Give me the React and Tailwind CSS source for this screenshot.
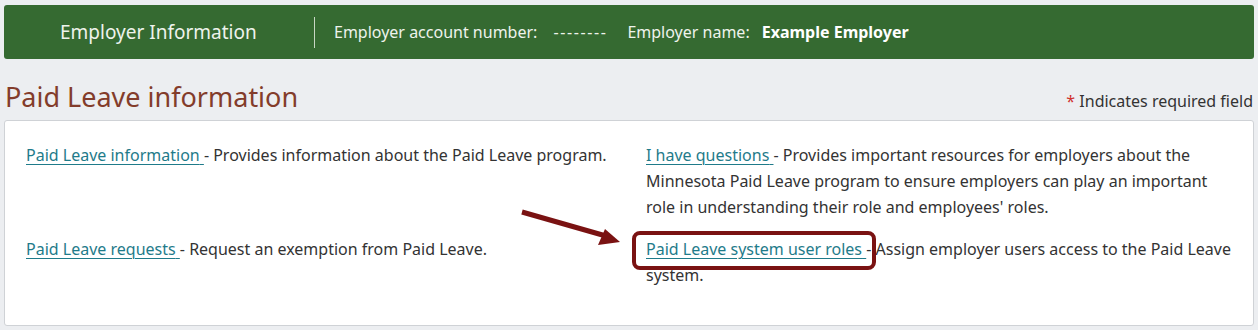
import React from 'react';

function Entry({ label, children }) {
  return (
    <p className="leading-[26px]">
      <a href="#" className="text-[#1f7b8a] underline underline-offset-[3px] decoration-1">
        {label}{' '}
      </a>
      - {children}
    </p>
  );
}

function Callout() {
  return (
    <>
      <svg className="absolute left-[518px] top-[205px]" width="110" height="45" viewBox="0 0 110 45">
        <line x1="4" y1="7" x2="88" y2="31" stroke="#7a1212" strokeWidth="5" />
        <polygon points="102,37 80,40 87,24" fill="#7a1212" />
      </svg>
      <div className="absolute left-[632px] top-[231px] w-[244px] h-[39px] border-[4px] border-[#7a1212] rounded-[8px]" />
    </>
  );
}

export default function App() {
  return (
    <div
      className="relative w-[1258px] h-[330px] bg-[#eceef1] px-[4px] pt-[5px] text-[#333] text-[16px] overflow-hidden"
      style={{ fontFamily: '"Noto Sans", "Open Sans", sans-serif' }}
    >
      <div className="flex items-center h-[54px] bg-[#356a31] rounded-[3px] text-[#eef3ec]">
        <div className="w-[310px] pl-[56px] text-[19px]">Employer Information</div>
        <div className="w-px h-[31px] bg-[#c8d6c4]" />
        <div className="flex items-center pl-[19px]">
          <span>Employer account number:</span>
          <span className="ml-[16px] tracking-[1.6px]">--------</span>
          <span className="ml-[20px]">Employer name:</span>
          <span className="ml-[12px] font-bold text-white">Example Employer</span>
        </div>
      </div>

      <div className="flex items-end justify-between h-[61px] pb-[7px]">
        <h1 className="text-[27px] leading-none text-[#833c2b] pl-px font-normal pb-[3px]">Paid Leave information</h1>
        <div className="pr-px">
          <span className="text-[#d0312d]">*</span> Indicates required field
        </div>
      </div>

      <div className="bg-white border border-[#cfd2d6] rounded-[3px] px-[21px] pt-[21px] pb-[37px]">
        <div className="grid grid-cols-2 gap-x-[34px] gap-y-[16px]">
          <Entry label="Paid Leave information">Provides information about the Paid Leave program.</Entry>
          <Entry label="I have questions">
            Provides important resources for employers about the Minnesota Paid Leave program to ensure employers can
            play an important role in understanding their role and employees' roles.
          </Entry>
          <Entry label="Paid Leave requests">Request an exemption from Paid Leave.</Entry>
          <Entry label="Paid Leave system user roles">Assign employer users access to the Paid Leave system.</Entry>
        </div>
      </div>

      <Callout />
    </div>
  );
}
